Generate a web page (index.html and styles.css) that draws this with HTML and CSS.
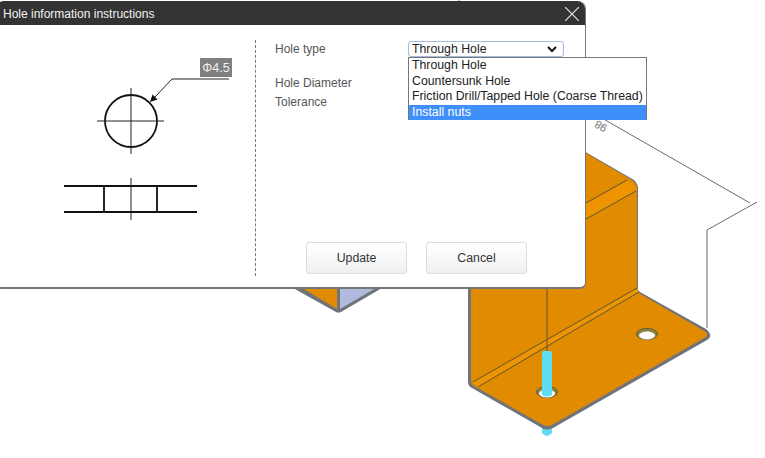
FILE: index.html

```html
<!DOCTYPE html>
<html lang="en">
<head>
    <meta charset="UTF-8">
    <meta name="viewport" content="width=device-width, initial-scale=1.0">
    <title>Hole information instructions</title>
    <link rel="stylesheet" href="styles.css">
</head>
<body>
    <div class="viewer">
        <!-- bracket model behind the dialog -->
        <svg class="model" width="765" height="458" viewBox="0 0 765 458">
            <path class="dim" d="M459 0V4M600 117L750 203M757 202L707 230V328"/>
            <text class="dim-text" transform="translate(608 126) rotate(210)">98</text>

            <path class="edge" d="M293 288L336 312Q338 313 341 312L382 288Z"/>
            <path class="orange" d="M302 288L337 309V288Z"/>
            <path class="blue" d="M340 288V309L376 288Z"/>

            <path class="cyan" d="M542 428H552V433Q547 439 542 433Z"/>
            <path class="edge" d="M468 270V382Q468 386 472 388L542 428Q547 431 553 428L707 340Q711 338 710 334Q709 331 706 329L640 292L638 290V188Q638 184 634 180L570 143Z"/>
            <path class="orange" d="M471 270V382Q472 385 474 386L543 425Q548 427 552 425L706 337Q708 335 706 332L637 292V188Q637 184 632 180L570 144Z"/>
            <path class="orange-bend" d="M586 203L627 181Q633 182 636 191L586 219Z"/>
            <path class="orange-bend" d="M473 382L637 288L639 292L478 387Z"/>
            <path class="bend-line" d="M586 203L627 180M586 219L636 191M473 382L637 288M478 387L639 292"/>
            <path class="bend-line" d="M547 270V351"/>

            <ellipse class="hole" cx="647" cy="334" rx="10.5" ry="5.5"/>
            <ellipse class="hole-inner" cx="647" cy="335.5" rx="8" ry="4"/>
            <ellipse class="hole" cx="547" cy="392" rx="10.5" ry="5.5"/>
            <ellipse class="hole-inner" cx="547" cy="393.5" rx="8" ry="4"/>
            <path class="cyan" d="M542 353Q542 351 544 351H550Q552 351 552 353V395Q547 398 542 395Z"/>
        </svg>

        <div class="dialog">
            <div class="dialog-title">
                <span>Hole information instructions</span>
                <svg class="close-icon" width="14" height="14" viewBox="0 0 14 14">
                    <path d="M0 0L14 14M14 0L0 14"/>
                </svg>
            </div>
            <div class="dialog-body">
                <div class="sketch-panel">
                    <svg class="sketch" width="255" height="235" viewBox="0 0 255 235">
                        <rect class="tag" x="204" y="18" width="32" height="19"/>
                        <text class="tag-text" x="220" y="32">Φ4.5</text>
                        <path class="thin" d="M233 39H176L159 57"/>
                        <path class="arrow" d="M154 62L156.5 54.5L161.5 59.5Z"/>
                        <circle class="thick" cx="135" cy="81" r="26"/>
                        <path class="thin" d="M101 81H168M135 48V114"/>
                        <path class="thick" d="M68 146H201M68 172H201M108 146V172M161 146V172"/>
                        <path class="thin" d="M135 138V180"/>
                    </svg>
                </div>
                <div class="form-panel">
                    <div class="form-fields">
                        <div class="field field-type">
                            <label>Hole type</label>
                            <div class="select-wrap">
                                <div class="select-box">
                                    <span>Through Hole</span>
                                    <svg class="chevron" width="10" height="7" viewBox="0 0 10 7">
                                        <path d="M1 1L5 5L9 1"/>
                                    </svg>
                                </div>
                                <ul class="select-list">
                                    <li>Through Hole</li>
                                    <li>Countersunk Hole</li>
                                    <li>Friction Drill/Tapped Hole (Coarse Thread)</li>
                                    <li class="active">Install nuts</li>
                                </ul>
                            </div>
                        </div>
                        <div class="field">
                            <label>Hole Diameter</label>
                        </div>
                        <div class="field">
                            <label>Tolerance</label>
                        </div>
                    </div>
                    <div class="buttons">
                        <button>Update</button>
                        <button>Cancel</button>
                    </div>
                </div>
            </div>
        </div>
    </div>
</body>
</html>
```

FILE: styles.css

```css
body {
    margin: 0;
    background-color: #ffffff;
    font-family: "Liberation Sans", Arial, sans-serif;
    font-size: 12px;
}

.viewer {
    position: relative;
    width: 765px;
    height: 458px;
    overflow: hidden;
}

.model {
    position: absolute;
    left: 0;
    top: 0;
}

.dim {
    fill: none;
    stroke: #6a6a6a;
    stroke-width: 1;
}

.dim-text {
    fill: #777;
    font-size: 11px;
}

.edge {
    fill: #6f747c;
}

.orange {
    fill: #e08b00;
}

.orange-bend {
    fill: #ee9400;
}

.blue {
    fill: #b0bbdd;
}

.cyan {
    fill: #5fdcf2;
}

.bend-line {
    fill: none;
    stroke: #5c5436;
    stroke-width: 1;
}

.hole {
    fill: #8f8440;
    stroke: #5c5c40;
    stroke-width: 1;
}

.hole-inner {
    fill: #ffffff;
}

.dialog {
    position: absolute;
    left: -4px;
    top: 1px;
    width: 590px;
    height: 288px;
    display: flex;
    flex-direction: column;
    box-sizing: border-box;
    background-color: #ffffff;
    border-right: 1px solid #777;
    border-bottom: 2px solid #777;
    border-radius: 8px 8px 6px 6px;
}

.dialog-title {
    height: 24px;
    flex-shrink: 0;
    box-sizing: border-box;
    display: flex;
    align-items: center;
    justify-content: space-between;
    padding: 1px 6px 0 7px;
    background-color: #333333;
    color: #f2f2f2;
    font-size: 12px;
    border-radius: 8px 8px 0 0;
}

.close-icon path {
    fill: none;
    stroke: #e6e6e6;
    stroke-width: 1.2;
}

.dialog-body {
    flex: 1;
    display: flex;
    min-height: 0;
}

.sketch-panel {
    width: 260px;
    flex-shrink: 0;
    box-sizing: border-box;
    margin: 15px 0 11px;
    border-right: 1px dashed #777;
}

.sketch {
    display: block;
}

.thin {
    fill: none;
    stroke: #222;
    stroke-width: 1;
}

.thick {
    fill: none;
    stroke: #111;
    stroke-width: 1.8;
}

.arrow {
    fill: #111;
}

.tag {
    fill: #7f7f7f;
}

.tag-text {
    fill: #f0f0f0;
    font-size: 12.5px;
    text-anchor: middle;
}

.form-panel {
    flex: 1;
    display: flex;
    flex-direction: column;
    padding: 15px 0 0 19px;
}

.form-fields {
    flex: 1;
}

.field {
    display: flex;
    align-items: center;
    height: 19px;
    color: #555;
}

.field-type {
    margin-bottom: 15px;
    height: 18px;
}

.field label {
    width: 133px;
}

.select-wrap {
    position: relative;
}

.select-box {
    width: 156px;
    height: 16px;
    box-sizing: border-box;
    display: flex;
    align-items: center;
    justify-content: space-between;
    padding: 0 6px 0 3px;
    border: 1px solid #a9b8dc;
    border-radius: 3px;
    color: #222;
    font-size: 12.3px;
}

.chevron path {
    fill: none;
    stroke: #111;
    stroke-width: 2;
}

.select-list {
    position: absolute;
    left: 0;
    top: 16px;
    margin: 0;
    padding: 0;
    list-style: none;
    width: 239px;
    box-sizing: border-box;
    background-color: #ffffff;
    border: 1px solid #777;
    border-bottom: none;
    color: #222;
    font-size: 12.3px;
}

.select-list li {
    height: 15.6px;
    line-height: 15px;
    padding-left: 3px;
    white-space: nowrap;
}

.select-list li.active {
    background-color: #3f8ffa;
    color: #ffffff;
}

.buttons {
    display: flex;
    gap: 19px;
    padding: 0 0 13px 31px;
}

.buttons button {
    width: 101px;
    height: 32px;
    padding: 0;
    background: linear-gradient(#ffffff, #f0f0f0);
    border: 1px solid #dddddd;
    border-radius: 3px;
    color: #333;
    font-family: inherit;
    font-size: 12.3px;
}
```
